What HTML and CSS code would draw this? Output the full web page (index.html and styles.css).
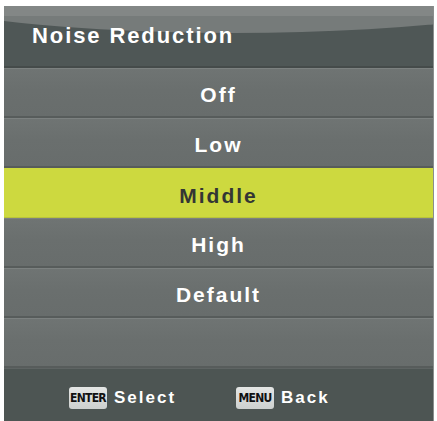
FILE: index.html
```html
<!DOCTYPE html>
<html>
<head>
<meta charset="utf-8">
<link rel="stylesheet" href="styles.css">
</head>
<body>
<div class="osd">
  <div class="header"><span class="title">Noise Reduction</span></div>
  <div class="list">
    <div class="row">Off</div>
    <div class="row">Low</div>
    <div class="row selected">Middle</div>
    <div class="row">High</div>
    <div class="row">Default</div>
    <div class="row empty"></div>
  </div>
  <div class="footer">
    <div class="hint"><span class="key">ENTER</span><span class="label">Select</span></div>
    <div class="hint"><span class="key">MENU</span><span class="label">Back</span></div>
  </div>
</div>
</body>
</html>
```

FILE: styles.css
```css
html, body {
  margin: 0;
  padding: 0;
  background: #ffffff;
}
body {
  font-family: "Liberation Sans", Arial, sans-serif;
}
.osd {
  margin: 6px 0 0 4px;
  width: 430px;
  height: 415px;
  display: flex;
  flex-direction: column;
  background: #6a6f6e;
  border-right: 1px solid #8a8e8d;
  box-sizing: border-box;
  overflow: hidden;
}
.header {
  position: relative;
  height: 62px;
  flex: none;
  background: #4f5756;
  border-bottom: 2px solid #454b4a;
  box-sizing: border-box;
  display: flex;
  align-items: center;
  overflow: hidden;
}
.header::before {
  content: "";
  position: absolute;
  left: -120px;
  top: -70px;
  width: 700px;
  height: 97px;
  border-radius: 50%;
  background: #767b7a;
}
.header::after {
  content: "";
  position: absolute;
  left: 0;
  top: 0;
  right: 0;
  height: 10px;
  background: #838786;
}
.title {
  position: relative;
  z-index: 1;
  margin-left: 28px;
  margin-top: 0;
  color: #ffffff;
  font-weight: bold;
  font-size: 22px;
  letter-spacing: 1.9px;
}
.list {
  display: flex;
  flex-direction: column;
  flex: none;
}
.row {
  height: 50px;
  box-sizing: border-box;
  display: flex;
  align-items: center;
  justify-content: center;
  padding-top: 5px;
  color: #ffffff;
  font-weight: bold;
  font-size: 21px;
  letter-spacing: 2px;
  background: linear-gradient(#6f7473, #6a6f6e 45%, #686d6c);
  border-top: 1px solid #7c8180;
  border-bottom: 2px solid #575c5b;
}
.row.selected {
  background: #cdd93f;
  color: #333634;
  border-top: 1px solid #cdd93f;
  border-bottom: 1px solid #b9c43a;
}
.footer {
  flex: 1;
  background: #4d5553;
  border-top: 1px solid #5e6463;
  display: flex;
  align-items: center;
  padding-left: 65px;
  padding-top: 5px;
  gap: 60px;
}
.hint {
  display: flex;
  align-items: center;
  gap: 7px;
}
.key {
  display: inline-flex;
  align-items: center;
  justify-content: center;
  width: 38px;
  height: 22px;
  border-radius: 3px;
  background: linear-gradient(#e4e6e5, #cdd0cf);
  color: #111111;
  font-family: "Liberation Sans Narrow", "DejaVu Sans Condensed", "Liberation Sans", sans-serif;
  font-size: 12px;
  letter-spacing: -0.7px;
  font-weight: bold;
}
.label {
  color: #ffffff;
  font-weight: bold;
  font-size: 17px;
  letter-spacing: 2px;
}
```
